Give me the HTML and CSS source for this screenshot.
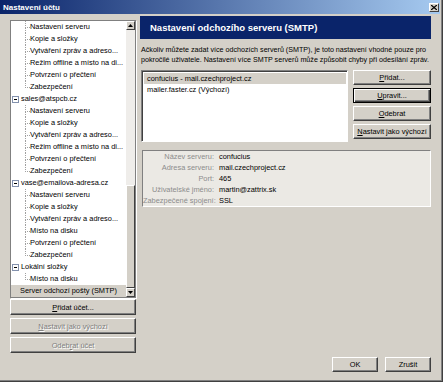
FILE: index.html
```html
<!DOCTYPE html>
<html>
<head>
    <meta charset="utf-8">
    <title>Nastavení účtu</title>
    <link rel="stylesheet" href="styles.css">
</head>
<body>
<div class="window">
    <div class="titlebar">
        <span class="title">Nastavení účtu</span>
        <div class="close">
            <svg width="6" height="5" viewBox="0 0 6 5"><path d="M0 0L6 5M6 0L0 5" stroke="#000" stroke-width="1.3"/></svg>
        </div>
    </div>

    <div class="main">
        <!-- left column: account tree -->
        <div class="left">
            <div class="tree">
                <div class="tree-items">
                    <div class="group">
                        <div class="row child">Nastavení serveru</div>
                        <div class="row child">Kopie a složky</div>
                        <div class="row child">Vytváření zpráv a adreso...</div>
                        <div class="row child">Režim offline a místo na di...</div>
                        <div class="row child">Potvrzení o přečtení</div>
                        <div class="row child">Zabezpečení</div>
                    </div>
                    <div class="row acct"><span class="exp"></span>sales@atspcb.cz</div>
                    <div class="group">
                        <div class="row child">Nastavení serveru</div>
                        <div class="row child">Kopie a složky</div>
                        <div class="row child">Vytváření zpráv a adreso...</div>
                        <div class="row child">Režim offline a místo na di...</div>
                        <div class="row child">Potvrzení o přečtení</div>
                        <div class="row child">Zabezpečení</div>
                    </div>
                    <div class="row acct"><span class="exp"></span>vase@emailova-adresa.cz</div>
                    <div class="group">
                        <div class="row child">Nastavení serveru</div>
                        <div class="row child">Kopie a složky</div>
                        <div class="row child">Vytváření zpráv a adreso...</div>
                        <div class="row child">Místo na disku</div>
                        <div class="row child">Potvrzení o přečtení</div>
                        <div class="row child">Zabezpečení</div>
                    </div>
                    <div class="row acct"><span class="exp"></span>Lokální složky</div>
                    <div class="group">
                        <div class="row child">Místo na disku</div>
                    </div>
                    <div class="row root selected">Server odchozí pošty (SMTP)</div>
                </div>
                <div class="scrollbar">
                    <div class="sb-btn"><svg width="5" height="3" viewBox="0 0 5 3"><path d="M2.5 0L5 3H0z" fill="#000"/></svg></div>
                    <div class="sb-track"></div>
                    <div class="sb-thumb"></div>
                    <div class="sb-btn"><svg width="5" height="3" viewBox="0 0 5 3"><path d="M0 0H5L2.5 3z" fill="#000"/></svg></div>
                </div>
            </div>
            <div class="left-buttons">
                <button class="btn"><u>P</u>řidat účet...</button>
                <button class="btn disabled"><u>N</u>astavit jako výchozí</button>
                <button class="btn disabled">Odeb<u>r</u>at účet</button>
            </div>
        </div>

        <!-- right column: SMTP settings -->
        <div class="right">
            <div class="header">Nastavení odchozího serveru (SMTP)</div>
            <p class="desc">Ačkoliv můžete zadat více odchozích serverů (SMTP), je toto nastavení vhodné pouze pro<br>pokročilé uživatele. Nastavení více SMTP serverů může způsobit chyby při odesílání zpráv.</p>

            <div class="servers">
                <div class="server-list">
                    <div class="srow selected">confucius - mail.czechproject.cz</div>
                    <div class="srow">mailer.faster.cz (Výchozí)</div>
                </div>
                <div class="server-buttons">
                    <button class="btn"><u>P</u>řidat...</button>
                    <button class="btn default"><u>U</u>pravit...</button>
                    <button class="btn"><u>O</u>debrat</button>
                    <button class="btn"><u>N</u>astavit jako výchozí</button>
                </div>
            </div>

            <div class="details">
                <span class="label">Název serveru:</span><span class="value">confucius</span>
                <span class="label">Adresa serveru:</span><span class="value">mail.czechproject.cz</span>
                <span class="label">Port:</span><span class="value">465</span>
                <span class="label">Uživatelské jméno:</span><span class="value">martin@zattrix.sk</span>
                <span class="label">Zabezpečené spojení:</span><span class="value">SSL</span>
            </div>
        </div>
    </div>

    <div class="footer">
        <button class="btn small">OK</button>
        <button class="btn small">Zrušit</button>
    </div>
</div>
</body>
</html>
```

FILE: styles.css
```css
body{
    margin:0;
    font-family:"Liberation Sans", Arial, sans-serif;
    font-size:7.4px;
    color:#000;
    background:#D4D0C8;
}
.window{
    width:443px;
    height:382px;
    box-sizing:border-box;
    background:#D4D0C8;
    border-right:1px solid #404040;
    border-bottom:1px solid #404040;
    box-shadow:inset -1px -1px #808080;
    padding:0 2px 2px 0;
    display:flex;
    flex-direction:column;
}

/* title bar */
.titlebar{
    height:14px;
    display:flex;
    align-items:center;
    justify-content:space-between;
    background:linear-gradient(to right, #0A246A, #A6CAF0);
    padding:0 1px 0 3px;
}
.title{
    color:#fff;
    font-weight:bold;
    font-size:8px;
}
.close{
    width:10px;
    height:9px;
    box-sizing:border-box;
    background:#D4D0C8;
    border:1px solid;
    border-color:#fff #404040 #404040 #fff;
    display:flex;
    align-items:center;
    justify-content:center;
}

/* main area */
.main{
    display:grid;
    grid-template-columns:126px 291px;
    column-gap:4px;
    padding:2px 9px 0 10px;
}
.left{
    margin-top:4px;
}
.tree{
    height:278px;
    box-sizing:border-box;
    border:1px solid #808080;
    box-shadow:1px 1px 0 #fff;
    background:#fff;
    display:flex;
}
.tree-items{
    flex:1;
    overflow:hidden;
}
.row{
    height:12px;
    line-height:12px;
    white-space:nowrap;
    overflow:hidden;
}
.child{
    position:relative;
    padding-left:19px;
}
.child::before{
    content:"";
    position:absolute;
    left:14px;
    top:0;
    width:4px;
    height:6px;
    border-left:1px dotted #a0a0a0;
    border-bottom:1px dotted #a0a0a0;
}
.child::after{
    content:"";
    position:absolute;
    left:14px;
    top:7px;
    bottom:0;
    border-left:1px dotted #a0a0a0;
}
.group .child:last-child::after{
    display:none;
}
.acct{
    display:flex;
    align-items:center;
    padding-left:1px;
}
.exp{
    width:5px;
    height:5px;
    border:1px solid #8391ad;
    background:#fff;
    margin-right:2px;
    position:relative;
}
.exp::after{
    content:"";
    position:absolute;
    left:1px;
    top:2px;
    width:3px;
    height:1px;
    background:#000;
}
.root{
    padding-left:9px;
}
.selected{
    background:#D4D0C8;
}

/* scrollbar */
.scrollbar{
    width:9px;
    display:flex;
    flex-direction:column;
}
.sb-btn{
    height:9px;
    box-sizing:border-box;
    background:#D4D0C8;
    border:1px solid;
    border-color:#fff #404040 #404040 #fff;
    display:flex;
    align-items:center;
    justify-content:center;
}
.sb-track{
    height:155px;
    background:#EFEDEA;
}
.sb-thumb{
    flex:1;
    box-sizing:border-box;
    background:#D4D0C8;
    border:1px solid;
    border-color:#fff #404040 #404040 #fff;
}

/* buttons */
.btn{
    box-sizing:border-box;
    height:15px;
    padding:0;
    font:inherit;
    color:#000;
    background:#D4D0C8;
    border:1px solid;
    border-color:#fff #404040 #404040 #fff;
    box-shadow:inset -1px -1px #808080;
    display:flex;
    align-items:center;
    justify-content:center;
    white-space:nowrap;
}
.btn.default{
    border-color:#000;
    box-shadow:inset 1px 1px #fff, inset -1px -1px #404040, inset -2px -2px #808080;
}
.btn.disabled{
    color:#808080;
    text-shadow:1px 1px #fff;
}
.left-buttons{
    display:flex;
    flex-direction:column;
    gap:3px;
    margin-top:1px;
}
.left-buttons .btn{
    height:16px;
}

/* right column */
.header{
    height:23px;
    line-height:23px;
    background:#0A246A;
    color:#fff;
    font-weight:bold;
    font-size:9.5px;
    padding-left:10px;
}
.desc{
    margin:6px 0 0 1px;
    font-size:7.15px;
    line-height:10px;
    white-space:nowrap;
}
.servers{
    display:flex;
    gap:5px;
    margin-top:5px;
    margin-left:1px;
}
.server-list{
    width:207px;
    height:72px;
    box-sizing:border-box;
    background:#fff;
    border:1px solid;
    border-color:#808080 #fff #fff #808080;
    box-shadow:inset 1px 1px #404040;
    padding:2px 1px 0 2px;
}
.srow{
    height:11px;
    line-height:11px;
    padding-left:3px;
}
.server-buttons{
    width:78px;
    display:flex;
    flex-direction:column;
    gap:3px;
}
.details{
    margin:8px 0 0 2px;
    box-sizing:border-box;
    border:1px solid;
    border-color:#808080 #fff #fff #808080;
    background:#EBE9E4;
    display:grid;
    grid-template-columns:71px 1fr;
    column-gap:5px;
    line-height:11px;
}
.label{
    text-align:right;
    color:#8c8c8c;
    white-space:nowrap;
}

/* footer */
.footer{
    margin-top:auto;
    display:flex;
    justify-content:flex-end;
    gap:7px;
    padding:0 9px 7px 0;
}
.btn.small{
    width:46px;
}
```
